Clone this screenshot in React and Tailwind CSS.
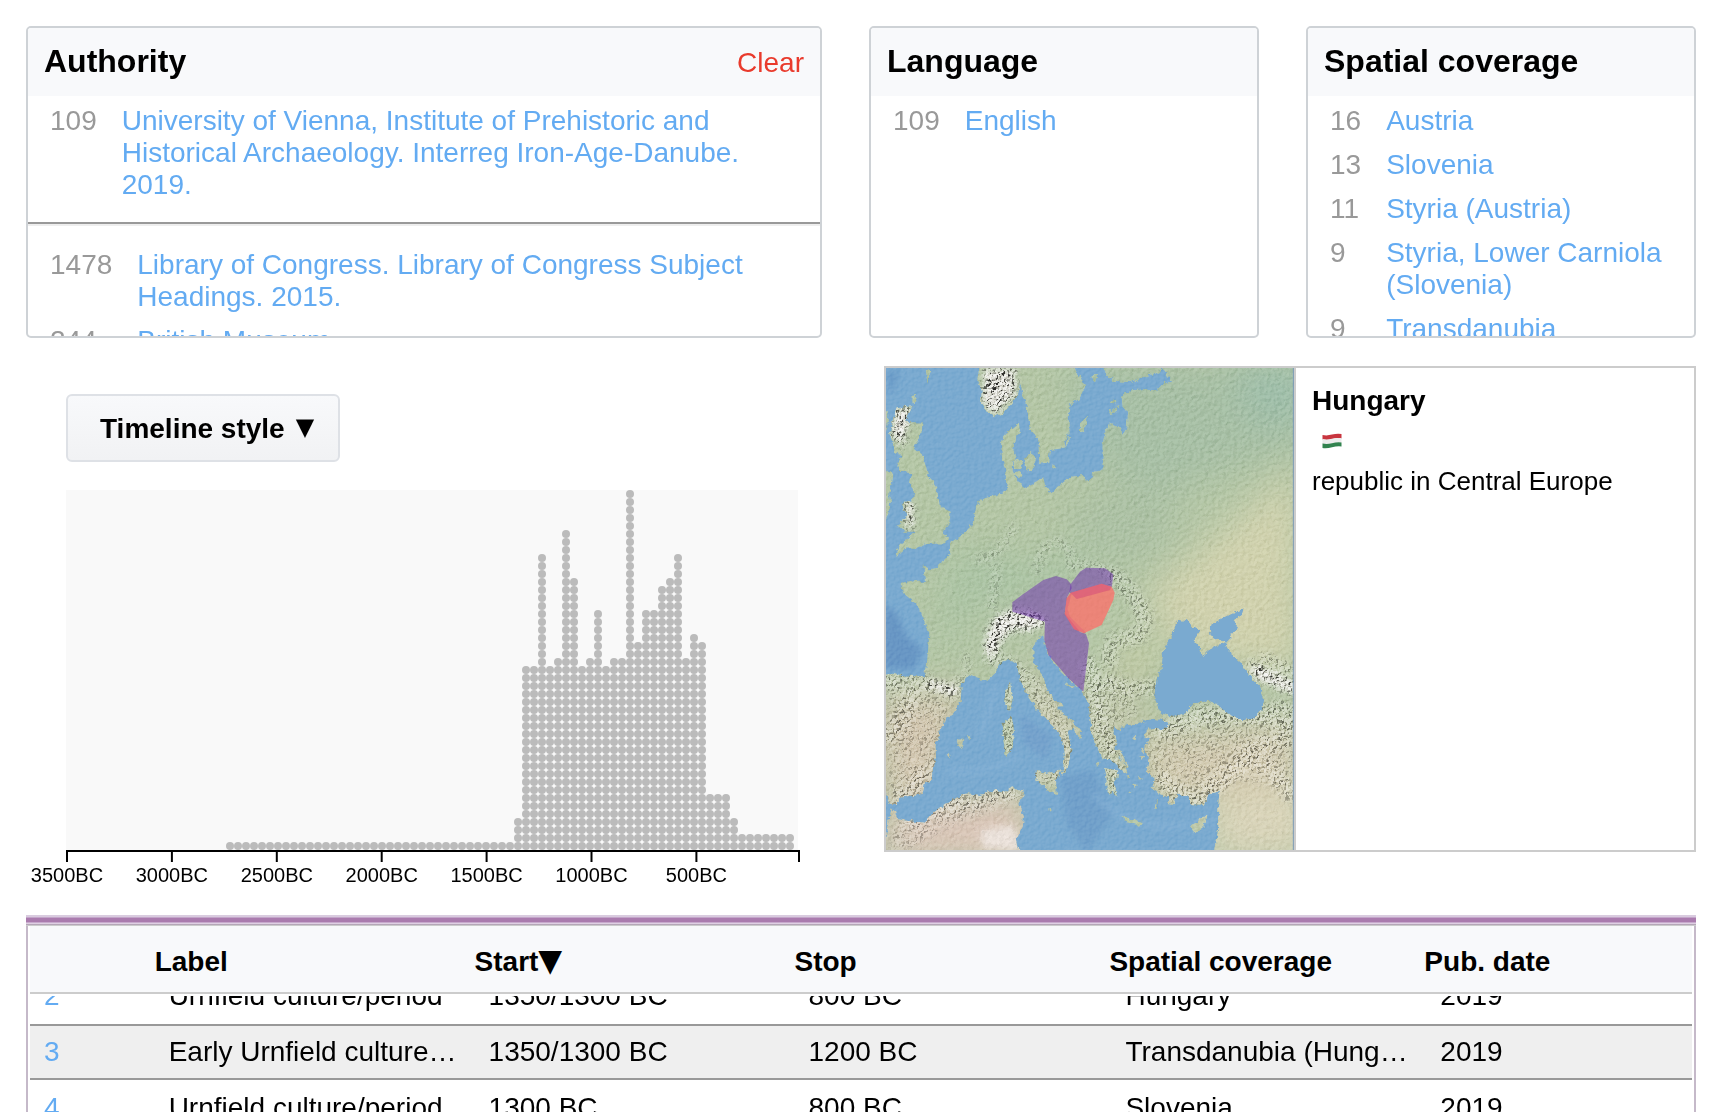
import { useLayoutEffect, useRef } from 'react';

const authorities = [
  [{ count: 109, label: 'University of Vienna, Institute of Prehistoric and Historical Archaeology. Interreg Iron-Age-Danube. 2019.' }],
  [
    { count: 1478, label: 'Library of Congress. Library of Congress Subject Headings. 2015.' },
    { count: 244, label: 'British Museum.' },
  ],
];
const languages = [[{ count: 109, label: 'English' }]];
const places = [
  [
    { count: 16, label: 'Austria' },
    { count: 13, label: 'Slovenia' },
    { count: 11, label: 'Styria (Austria)' },
    { count: 9, label: 'Styria, Lower Carniola (Slovenia)' },
    { count: 9, label: 'Transdanubia' },
  ],
];

const periods = [
  [2, 'Urnfield culture/period', '1350/1300 BC', '800 BC', 'Hungary', '2019'],
  [3, 'Early Urnfield culture/period', '1350/1300 BC', '1200 BC', 'Transdanubia (Hungary)', '2019'],
  [4, 'Urnfield culture/period', '1300 BC', '800 BC', 'Slovenia', '2019'],
];

function Facet({ title, groups, clearable }) {
  return (
    <section className="flex h-[312px] min-w-0 flex-col overflow-hidden rounded-[5px] border-2 border-[#ced2d6] bg-white">
      <header className="flex h-[68px] shrink-0 items-center justify-between bg-[#f8f9fb] px-4">
        <h2 className="pb-0.5 text-[32px] leading-9 font-bold">{title}</h2>
        {clearable && (
          <button type="button" className="pt-0.5 text-[28px] leading-8 text-[#e93a2c]">
            Clear
          </button>
        )}
      </header>
      <div className="min-h-0 flex-1 overflow-y-auto [scrollbar-width:none]">
        {groups.map((group, i) => (
          <div key={i}>
            {i > 0 && <hr className="mt-3 mb-3.5 h-1 border-t-2 border-b-2 border-t-[#999] border-b-[#eee]" />}
            <ul className="grid grid-cols-[auto_1fr] gap-x-[25px] py-[3px] pr-3.5 pl-[22px] text-[28px] leading-8">
              {group.map((item) => (
                <li key={item.label} className="col-span-2 grid grid-cols-subgrid py-1.5">
                  <span className="text-[#999]">{item.count}</span>
                  <a href="#" className="text-[#63abf2]">{item.label}</a>
                </li>
              ))}
            </ul>
          </div>
        ))}
      </div>
    </section>
  );
}

const stacks = [
  ...Array(36).fill(1),
  4, 23, 23, 37, 23, 24, 40, 34, 23, 24, 30, 23, 24, 24, 45, 26, 30, 30, 33, 34, 37, 24, 27, 26,
  7, 7, 7, 4, 2, 2, 2, 2, 2, 2, 2,
];
const ticks = ['3500BC', '3000BC', '2500BC', '2000BC', '1500BC', '1000BC', '500BC'];

function Timeline() {
  return (
    <svg viewBox="0 0 796 400" className="mt-7 block w-full" role="img" aria-label="Periods by year">
      <rect x="40" y="0" width="732" height="360" fill="#f9f9f9" />
      <g fill="#bbb">
        {stacks.map((n, col) =>
          Array.from({ length: n }, (_, row) => (
            <circle key={`${col}-${row}`} cx={204 + col * 8} cy={356 - row * 8} r="4" />
          )),
        )}
      </g>
      <path d="M41 372V361H773V372" fill="none" stroke="#000" strokeWidth="2" />
      {ticks.map((label, i) => (
        <g key={label}>
          <line x1={41 + i * 104.9} x2={41 + i * 104.9} y1="361" y2="372" stroke="#000" strokeWidth="2" />
          <text x={41 + i * 104.9} y="392" textAnchor="middle" fontSize="20">{label}</text>
        </g>
      ))}
    </svg>
  );
}

const mainland =
  'M1250 10L840 10L850 30L862 45L880 66L850 70L830 92L790 88L750 92L725 108L728 140L745 155L740 205L730 222L718 205L708 195L690 190L678 210L668 250L668 330L640 336L636 355L620 362L605 345L575 350L545 370L512 398L495 375L490 352L465 370L435 385L425 378L405 350L398 330L400 305L408 285L397 265L405 250L410 225L420 212L416 190L400 203L385 213L370 228L363 245L366 300L375 322L378 360L382 392L360 400L355 408L325 412L300 420L288 440L280 480L265 510L240 530L210 548L210 585L185 605L170 625L148 628L130 613L135 665L110 665L95 660L62 672L70 700L98 722L120 745L128 770L148 820L145 860L140 920L135 948L100 948L60 945L40 938L10 945L10 1290L30 1335L48 1335L55 1315L100 1305L128 1298L135 1270L155 1255L160 1215L168 1190L166 1155L195 1075L220 1060L242 1025L245 970L265 945L290 955L320 965L340 945L360 912L385 898L410 915L420 960L440 1000L470 1045L500 1080L530 1110L550 1150L555 1185L550 1225L545 1242L556 1238L565 1200L575 1170L568 1140L562 1110L580 1105L597 1138L605 1138L603 1115L580 1085L545 1055L530 1040L550 1038L545 1030L525 1020L500 985L490 950L465 915L460 880L465 845L490 825L496 862L515 900L540 930L575 965L605 990L625 1030L632 1080L635 1125L655 1170L665 1195L690 1198L720 1225L742 1238L735 1215L712 1190L735 1200L725 1180L705 1165L712 1150L703 1120L703 1100L720 1110L722 1095L735 1105L740 1090L760 1095L800 1080L830 1080L800 1115L790 1120L805 1140L795 1165L805 1200L800 1235L825 1260L815 1285L835 1300L865 1310L862 1332L882 1335L892 1300L925 1310L935 1335L970 1338L985 1300L1018 1296L1015 1340L1015 1400L1005 1480L1250 1480Z';
const africa =
  'M10 1480L22 1400L35 1345L45 1355L50 1378L100 1385L135 1388L160 1358L215 1320L260 1300L300 1305L345 1290L375 1295L400 1275L412 1295L430 1288L430 1308L415 1330L432 1370L428 1400L408 1440L412 1460L430 1480Z';
const islands = [
  'M300 10L292 60L305 90L303 130L325 158L345 170L370 160L400 125L415 100L420 70L430 110L440 140L450 210L475 240L478 308L505 305L510 270L550 265L565 210L568 135L600 115L615 80L600 50L575 10Z',
  'M50 145L98 138L85 165L75 185L128 188L122 230L100 262L130 290L145 345L170 385L180 440L212 455L208 490L185 520L205 530L195 550L140 552L110 565L80 562L45 592L60 555L90 530L104 515L75 515L50 495L80 470L65 430L98 420L102 400L90 370L95 340L60 335L52 315L65 285L45 280L30 220L38 180Z',
  'M10 315L40 350L28 400L30 440L18 480L10 485Z',
  'M10 140L25 160L22 200L10 240Z', 'M95 108L108 105L104 130L94 126Z', 'M138 28L152 34L142 72Z',
  'M400 302L422 298L428 322L406 330Z', 'M432 300L452 276L468 298L455 335L436 325Z', 'M402 340L420 335L425 350L410 350Z',
  'M600 190L624 172L612 215L600 222Z', 'M571 200L562 262L556 262Z', 'M688 152L715 138L710 155L690 162Z', 'M690 122L712 116L705 132Z',
  'M630 50L652 42L645 64Z', 'M516 316L528 322L522 330Z', 'M660 10L680 42L700 62L750 66L790 50L840 36L850 10Z',
  'M390 968L397 1020L390 1054L376 1035L376 990Z', 'M366 1092L395 1070L402 1110L398 1165L378 1188L370 1140Z',
  'M467 1232L500 1242L545 1228L528 1260L530 1306L490 1280L470 1260Z',
  'M230 1148L250 1132L246 1165Z', 'M262 1128L274 1132L268 1140Z', 'M202 1185L210 1180L206 1192Z',
  'M672 1225L690 1228L715 1232L712 1255L700 1262L714 1310L697 1295L690 1305L680 1280Z',
  'M725 1368L755 1378L787 1386L780 1398L730 1384Z', 'M930 1400L955 1382L982 1362L970 1400L945 1420Z', 'M823 1348L834 1318L830 1350Z',
  'M712 1180L740 1210L748 1225L735 1220Z', 'M780 1160L795 1168L790 1182Z', 'M757 1132L768 1125L766 1140Z', 'M780 1190L792 1192L786 1200Z',
  'M650 1205L658 1208L655 1220Z', 'M760 1270L770 1275L764 1284Z', 'M775 1250L785 1256L777 1260Z', 'M740 1245L750 1252L744 1258Z', 'M745 1290L754 1296L748 1300Z',
  'M508 1345L516 1350L510 1355Z', 'M548 965L585 978L578 982Z',
].join('');
const inlandSeas =
  'M895 780L925 785L935 800L960 812L940 840L960 865L965 893L985 872L1010 858L1035 852L1050 880L1090 915L1110 950L1140 980L1152 1020L1145 1050L1120 1075L1085 1080L1040 1060L1015 1035L985 1022L940 1030L915 1060L880 1070L845 1060L822 1010L830 960L845 930L850 870L870 835ZM990 800L1020 780L1050 765L1090 745L1085 765L1060 780L1070 800L1050 830L1040 850L1010 835L992 825ZM785 1095L815 1078L845 1080L870 1095L840 1108L810 1105Z';
const peaks = [
  'M325 900Q305 840 345 780Q385 735 480 768L495 785Q440 820 410 805Q360 820 345 880Z',
  'M145 962L240 985L225 1005L150 978Z',
  'M315 30L400 30L405 100L345 158L312 130Z',
  'M1110 910L1240 970L1240 1000L1125 950Z',
  'M50 150L90 145L68 255L38 220ZM82 425L98 440L94 505L82 498Z',
];
const uplands = [
  'M620 860L640 1110L700 1200L700 1290L740 1230L700 1100L740 1080L780 1060L740 980L680 950Z',
  'M800 1120L960 1030L1240 1040V1290L1080 1260L960 1340L850 1300L800 1200Z',
  'M18 950L240 990L200 1060L160 1180L130 1300L30 1330Z',
  'M50 1370L200 1330L400 1290L420 1320L200 1400L80 1470H30Z',
].join('');
const ridges = [
  'M345 898Q430 930 480 1010Q540 1090 560 1130L560 1210', 'M625 920Q650 1020 660 1110Q700 1190 700 1290', 'M690 965Q740 1000 810 980',
  'M700 650Q760 690 790 760Q800 840 720 840Q680 850 690 900', 'M160 1220Q120 1250 60 1320', 'M20 960L140 970M20 1130Q80 1090 90 1010',
  'M90 1380Q200 1330 400 1290', 'M850 1110Q960 1050 1160 1070L1230 1090', 'M850 1260Q880 1310 960 1320Q1040 1220 1140 1200L1230 1300', 'M1090 1180L1220 1130',
  'M388 980L388 1040M386 1090L386 1170', 'M470 1245L530 1250', 'M1160 900L1240 950', 'M1190 1040L1240 1060',
].join('');
const lowRidges =
  'M290 600Q360 600 400 500M350 620L335 740M470 630Q480 560 530 545Q580 560 570 600M570 620Q620 600 700 640M260 890Q270 950 230 960';

function ReliefMap() {
  return (
    <svg viewBox="18 24 1224 1446" preserveAspectRatio="xMidYMid slice" className="absolute inset-0 size-full" role="img" aria-label="Map of Europe">
      <defs>
        <filter id="coast" x="0" y="0" width="1260" height="1480" filterUnits="userSpaceOnUse">
          <feTurbulence type="fractalNoise" baseFrequency="0.07" numOctaves="3" seed="4" />
          <feDisplacementMap in="SourceGraphic" scale="16" xChannelSelector="R" yChannelSelector="G" />
        </filter>
        <filter id="relief" x="0" y="0" width="1260" height="1480" filterUnits="userSpaceOnUse" colorInterpolationFilters="sRGB">
          <feTurbulence type="fractalNoise" baseFrequency="0.13" numOctaves="3" seed="9" />
          <feDiffuseLighting surfaceScale="14" diffuseConstant="1.05" lightingColor="#fff">
            <feDistantLight azimuth="225" elevation="50" />
          </feDiffuseLighting>
        </filter>
        <filter id="plain" x="0" y="0" width="1260" height="1480" filterUnits="userSpaceOnUse" colorInterpolationFilters="sRGB">
          <feTurbulence type="fractalNoise" baseFrequency="0.09" numOctaves="3" seed="2" />
          <feDiffuseLighting surfaceScale="6" diffuseConstant="0.74" lightingColor="#fff">
            <feDistantLight azimuth="225" elevation="45" />
          </feDiffuseLighting>
        </filter>
        <filter id="soft" x="0" y="0" width="1260" height="1480" filterUnits="userSpaceOnUse">
          <feGaussianBlur stdDeviation="10" />
        </filter>
        <filter id="haze" x="-300" y="-300" width="1900" height="2100" filterUnits="userSpaceOnUse">
          <feGaussianBlur stdDeviation="55" />
        </filter>
        <clipPath id="land"><path d={mainland + islands + africa} /></clipPath>
        <mask id="rough" maskUnits="userSpaceOnUse" x="0" y="0" width="1260" height="1480">
          <g filter="url(#soft)">
            <path d={uplands} fill="#fff" fillOpacity="0.28" />
            <path d={lowRidges} fill="none" stroke="#fff" strokeOpacity="0.3" strokeWidth="26" strokeLinecap="round" />
            <path d={ridges} fill="none" stroke="#fff" strokeOpacity="0.42" strokeWidth="50" strokeLinecap="round" />
            {peaks.map((d) => <path key={d} d={d} fill="#fff" stroke="#fff" strokeWidth="10" />)}
          </g>
        </mask>
      </defs>
      <rect width="1260" height="1480" fill="#7aaad0" />
      <g filter="url(#soft)" fill="none">
        <path d="M10 730L50 760L80 830L130 870L100 930L10 925Z" fill="#6796c4" />
        <path d="M540 1250L640 1230L700 1360L620 1480L560 1390Z" fill="#71a0ca" />
        <path d="M420 1060L520 1130L500 1200L430 1150Z" fill="#74a2cc" />
        <path d="M18 30L60 40L30 110Z" fill="#6b9bc8" />
        <path d="M300 1130Q330 1040 350 980M200 1230Q300 1250 420 1190M640 1300Q760 1440 1000 1380" stroke="#84b1d6" strokeWidth="12" />
      </g>
      <g filter="url(#coast)">
        <g clipPath="url(#land)">
          <rect width="1260" height="1480" fill="#b9cda9" />
          <g filter="url(#haze)">
            <path d="M560 10H1300V260L1050 330L800 420L620 300Z" fill="#abc6a9" />
            <path d="M1060 10H1300V180H1120Z" fill="#a0c4ae" />
            <path d="M1250 330L1080 470L900 620L800 700L850 820L1000 900L1260 930Z" fill="#d9dab2" />
            <path d="M560 400L900 420L850 600L600 600Z" fill="#b0c7a7" />
            <path d="M200 560L460 600L700 560L560 700L300 740L160 900Z" fill="#afcaa7" />
            <path d="M0 1010L260 990L180 1330H0Z" fill="#d8c9ad" />
            <path d="M780 1130L1260 1080V1300L820 1340Z" fill="#d8ceae" />
            <path d="M1000 1280H1300V1500H980Z" fill="#e2ddbf" />
            <path d="M0 1380L430 1290L460 1500H0Z" fill="#e6cebf" />
            <path d="M420 900L620 1060L580 1280H440Z" fill="#c9caaa" />
            <path d="M630 980L800 950L760 1280H640Z" fill="#c3caa8" />
            <path d="M700 860L830 830L820 960L700 940Z" fill="#cbd3a8" />
          </g>
          <path d="M300 1410L400 1395L420 1470L310 1465Z" fill="#f6ece4" filter="url(#soft)" />
          <g filter="url(#soft)">
            {peaks.map((d) => <path key={d} d={d} fill="#dcdcd0" />)}
          </g>
        </g>
        <path d={inlandSeas} fill="#7aaad0" />
      </g>
      <rect width="1260" height="1480" filter="url(#plain)" opacity="0.1" className="mix-blend-overlay" />
      <g filter="url(#coast)">
        <g clipPath="url(#land)">
          <rect width="1260" height="1480" filter="url(#plain)" opacity="0.1" className="mix-blend-hard-light" />
        </g>
      </g>
      <g filter="url(#coast)" className="mix-blend-hard-light">
        <g clipPath="url(#land)">
          <g mask="url(#rough)">
            <rect width="1260" height="1480" filter="url(#relief)" opacity="0.8" />
          </g>
        </g>
      </g>
      <g filter="url(#coast)">
        <path d={inlandSeas} fill="#7aaad0" />
      </g>
      <g fill="#6a2aae" fillOpacity="0.5">
        <path d="M397 727L430 702L490 660L528 648L560 658L573 672L575 685L562 710L554 760L600 816L618 822L627 850L610 995L565 955L505 885L493 840L495 785L397 755Z" />
        <path d="M572 672L600 635L618 623L675 625L700 643L696 678L690 690L590 717L568 696Z" />
      </g>
      <path d="M572 698L665 671L695 680L704 698L700 720L665 795L612 820L582 808L554 762L560 715Z" fill="#ff6d68" fillOpacity="0.74" />
      <path d="M572 698L665 671L693 680L690 690L590 717ZM572 698L560 715L554 762L582 808L612 820L618 818L570 770L562 745L575 702Z" fill="#d8487c" fillOpacity="0.25" />
      <path d="M1240 0V1480" stroke="#7b9bb8" strokeWidth="3" />
    </svg>
  );
}

function HungaryFlag() {
  return (
    <svg viewBox="0 0 20 16" className="block h-4 w-5" role="img" aria-label="Flag of Hungary">
      <path d="M0.500 2Q5 3 10 1.600T19.500 1V5.500Q15 4.500 10 6T0.500 6.500Z" fill="#c8353f" />
      <path d="M0.500 6Q5 7 10 5.800T19.500 5V10Q15 9 10 10.500T0.500 11Z" fill="#ececec" />
      <path d="M0.500 10.500Q5 11.500 10 10.200T19.500 9.500V13.500Q15 13 10 14.300T0.500 15Z" fill="#32834f" />
    </svg>
  );
}

function PeriodTable() {
  const scroller = useRef(null);
  useLayoutEffect(() => {
    scroller.current.scrollTop = 26;
  }, []);
  const head = 'border-b-2 border-[#ccc] bg-[#f8f9fb] pt-5 pb-3.5 text-left font-bold whitespace-nowrap';
  return (
    <section className="mt-[25px] flex min-h-0 flex-1 flex-col">
      <div className="h-[11px] shrink-0 bg-[linear-gradient(#d9cbdf_0_2px,#c3a5c9_2px_3px,#aa7bae_3px_7px,#c8aacd_7px_8px,#dfd0e3_8px_9px,#b5a6b8_9px_10px,#ccc_10px_11px)]" />
      <div ref={scroller} className="min-h-0 flex-1 overflow-y-auto border-x-2 border-[#c5b9c9] px-0.5 [scrollbar-width:none]">
        <table className="w-full table-fixed border-separate border-spacing-0 text-[28px] leading-8">
          <colgroup>
            <col className="w-[7.5%]" />
            <col className="w-[19.25%]" />
            <col className="w-[19.25%]" />
            <col className="w-[18.95%]" />
            <col className="w-[18.95%]" />
            <col />
          </colgroup>
          <thead className="sticky top-0 shadow-[0_2px_#fff]">
            <tr>
              <th scope="col" className={head} aria-label="Row" />
              <th scope="col" className={head}>Label</th>
              <th scope="col" className={head}>
                <button type="button" className="flex items-center leading-8 font-bold">
                  Start
                  <span className="pb-1 font-[DejaVu_Sans,sans-serif] text-[31px] leading-7 font-normal">▼</span>
                </button>
              </th>
              <th scope="col" className={head}>Stop</th>
              <th scope="col" className={head}>Spatial coverage</th>
              <th scope="col" className={head}>Pub. date</th>
            </tr>
          </thead>
          <tbody>
            {periods.map(([id, ...cells]) => {
              const odd = id % 2 === 1;
              const cell = odd
                ? 'truncate border-y-2 border-[#999] bg-[#efefef] py-2.5'
                : 'truncate bg-white py-3';
              return (
                <tr key={id}>
                  <td className={`${cell} pl-3.5`}>
                    <a href="#" className="text-[#63abf2]">{id}</a>
                  </td>
                  {cells.map((text, i) => (
                    <td key={i} className={`${cell} pr-4 ${i < 3 ? 'pl-3.5' : 'pl-4'}`}>{text}</td>
                  ))}
                </tr>
              );
            })}
          </tbody>
        </table>
      </div>
    </section>
  );
}

export default function App() {
  return (
    <main className="flex h-screen flex-col overflow-hidden bg-white pt-[26px] pr-6 pl-[26px] font-['Liberation_Sans',Arial,sans-serif] text-black">
      <div className="grid grid-cols-[796fr_390fr_390fr] gap-[47px]">
        <Facet title="Authority" groups={authorities} clearable />
        <Facet title="Language" groups={languages} />
        <Facet title="Spatial coverage" groups={places} />
      </div>

      <div className="mt-7 grid grid-cols-[796fr_812fr] gap-[62px]">
        <div className="pt-7">
          <button
            type="button"
            className="ml-10 flex h-[68px] items-center gap-[11px] rounded-md border-2 border-[#dee1e6] bg-linear-to-b from-[#f8f9fb] to-[#f1f2f4] pt-0.5 pr-6 pl-8 text-[28px] leading-8 font-bold"
          >
            Timeline style
            <span className="pb-1 font-[DejaVu_Sans,sans-serif] text-[24px] leading-7 font-normal">▼</span>
          </button>
          <Timeline />
        </div>
        <div className="grid h-[486px] grid-cols-[408fr_400fr] border-2 border-[#ccc]">
          <div className="relative overflow-hidden">
            <ReliefMap />
          </div>
          <div className="border-l-2 border-[#ccc] px-4 pt-[17px] leading-8">
            <h3 className="text-[28px] leading-8 font-bold">Hungary</h3>
            <div className="flex h-12 items-center px-2.5">
              <HungaryFlag />
            </div>
            <p className="text-[26px] leading-8">republic in Central Europe</p>
          </div>
        </div>
      </div>

      <PeriodTable />
    </main>
  );
}
